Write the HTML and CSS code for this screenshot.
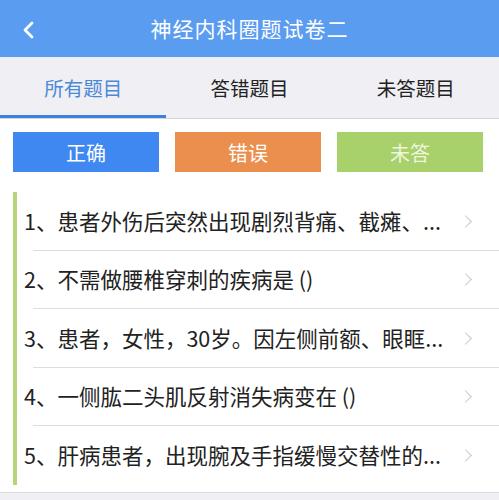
FILE: index.html
```html
<!DOCTYPE html>
<html lang="zh-CN">
<head>
    <meta charset="UTF-8">
    <meta name="viewport" content="width=device-width, initial-scale=1.0">
    <title>神经内科圈题试卷二</title>
    <link rel="stylesheet" href="styles.css">
</head>
<body>
    <div class="header">
        <span class="back">
            <svg width="14" height="18" viewBox="0 0 14 18"><path d="M10 2 L3 9 L10 16" fill="none" stroke="#fff" stroke-width="2.8" stroke-linecap="round" stroke-linejoin="round"/></svg>
        </span>
        <div class="title">神经内科圈题试卷二</div>
    </div>

    <div class="tabs">
        <div class="tab active">所有题目</div>
        <div class="tab">答错题目</div>
        <div class="tab">未答题目</div>
    </div>

    <div class="legend">
        <div class="btn btn-right">正确</div>
        <div class="btn btn-wrong">错误</div>
        <div class="btn btn-none">未答</div>
    </div>

    <div class="list">
        <div class="item"><span class="q">1、患者外伤后突然出现剧烈背痛、截瘫、...</span><span class="arrow"></span></div>
        <div class="item"><span class="q">2、不需做腰椎穿刺的疾病是 ()</span><span class="arrow"></span></div>
        <div class="item"><span class="q">3、患者，女性，30岁。因左侧前额、眼眶...</span><span class="arrow"></span></div>
        <div class="item"><span class="q">4、一侧肱二头肌反射消失病变在 ()</span><span class="arrow"></span></div>
        <div class="item last"><span class="q">5、肝病患者，出现腕及手指缓慢交替性的...</span><span class="arrow"></span></div>
    </div>
</body>
</html>
```

FILE: styles.css
```css
* { box-sizing: border-box; margin: 0; padding: 0; }
body { width: 499px; height: 500px; background: #efeff4; font-family: "Noto Sans CJK SC", "Noto Sans", sans-serif; color: #222; overflow: hidden; }

.header { height: 57px; background: #5a9cf0; display: flex; align-items: center; position: relative; }
.back { position: absolute; left: 22px; top: 20px; }
.title { flex: 1; text-align: center; color: #fff; font-size: 21px; letter-spacing: 1px; padding-bottom: 1px; }

.tabs { height: 62px; display: flex; background: #efeff4; border-bottom: 1px solid #d6d6da; }
.tab { flex: 1; display: flex; align-items: center; justify-content: center; font-size: 19.5px; color: #222; border-bottom: 3px solid transparent; padding-top: 2px; }
.tab.active { color: #4a88d8; border-bottom-color: #3f7fe0; }

.legend { display: flex; gap: 16px; padding: 13px 16px 20px 13px; background: #fff; }
.btn { flex: 1; height: 40px; display: flex; align-items: center; justify-content: center; color: #fff; font-size: 20px; }
.btn-right { background: #3f88f2; }
.btn-wrong { background: #ea8f4e; }
.btn-none { background: #a8d06b; color: #eef7de; }

.list { background: #fff; padding-bottom: 7px; border-bottom: 1px solid #d9d9dd; }
.item { position: relative; margin-left: 13px; height: 58.5px; border-left: 4px solid #b6d47c; display: flex; align-items: center; padding: 0 29px 0 7px; font-size: 21.5px; }
.item::after { content: ""; position: absolute; left: 16px; right: 0; bottom: 0; height: 1px; background: #dedee2; }
.item.last::after { display: none; }
.q { flex: 1; white-space: nowrap; overflow: hidden; margin-top: -2px; }
.arrow { width: 9px; height: 9px; border-top: 1.5px solid #c8c8cc; border-right: 1.5px solid #c8c8cc; transform: rotate(45deg); }
```
